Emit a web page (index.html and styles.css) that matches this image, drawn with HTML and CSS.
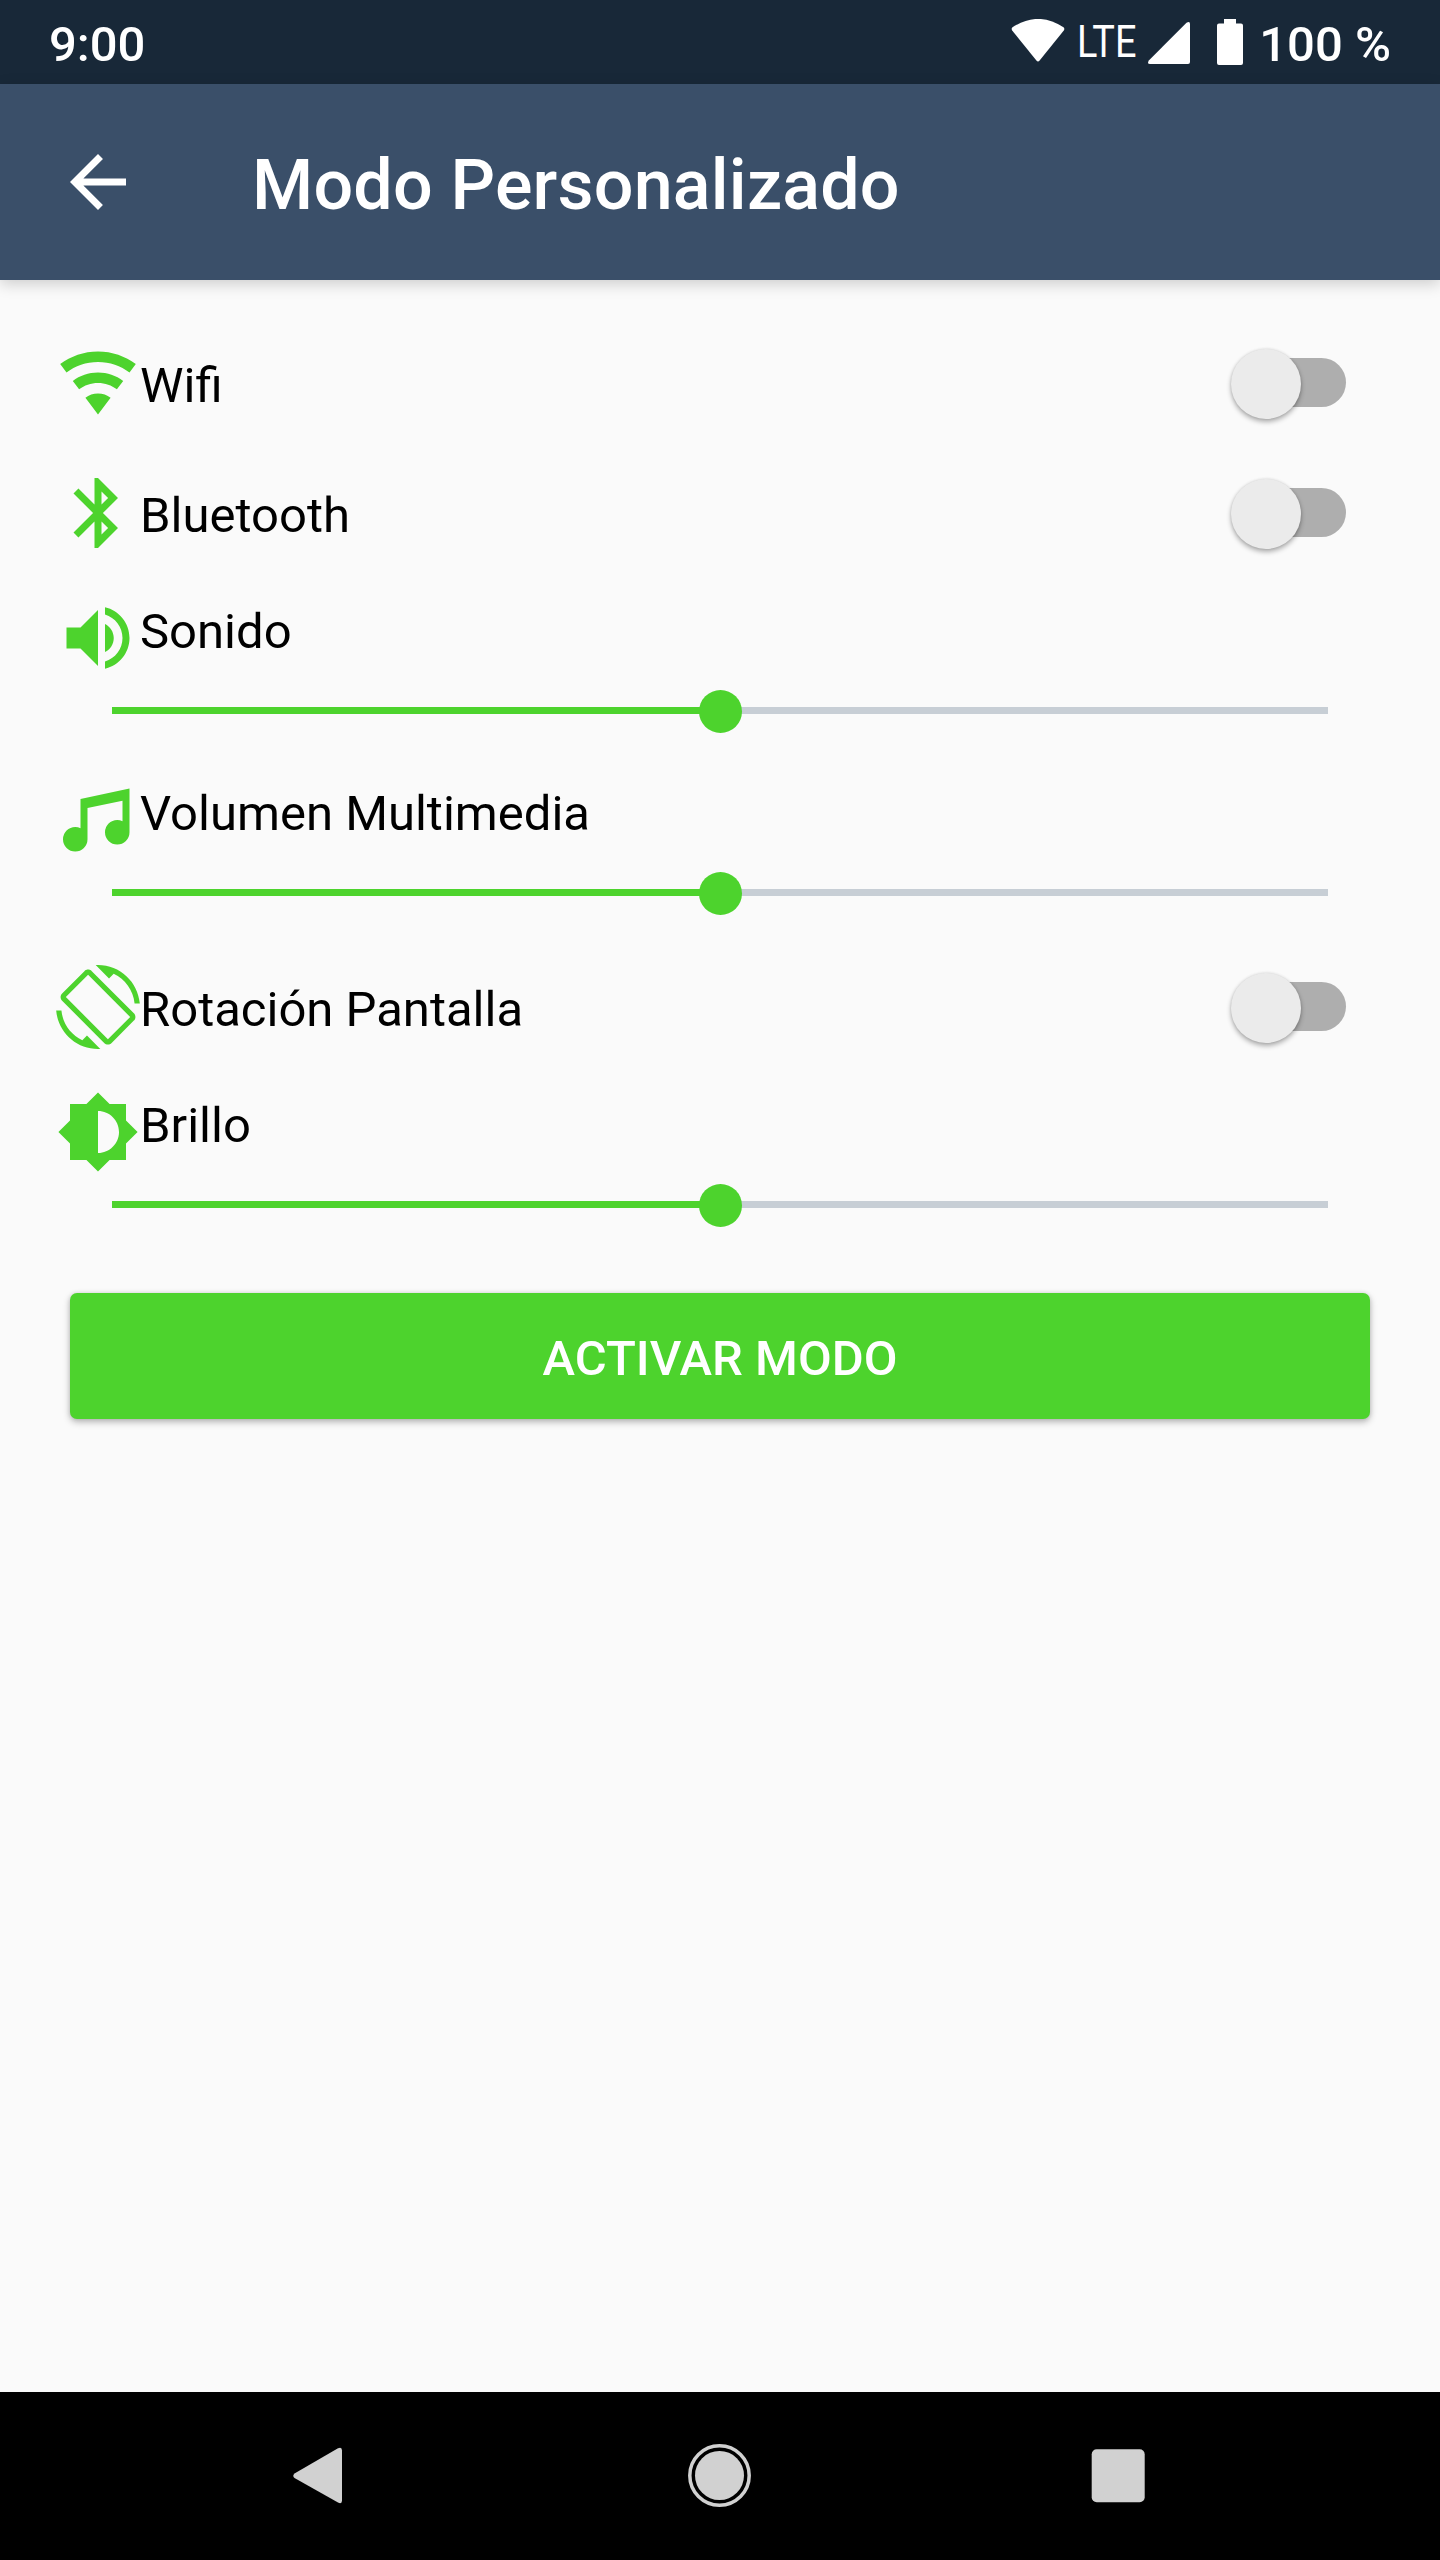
FILE: index.html
```html
<!DOCTYPE html>
<html lang="es">
<head>
  <meta charset="utf-8">
  <title>Modo Personalizado</title>
  <link rel="stylesheet" href="styles.css">
</head>
<body>
  <div class="statusbar">
    <span class="clock">9:00</span>
    <svg class="status-wifi" viewBox="0 0 54 43">
      <path d="M1.500 8.300 Q27 -8.500 52.500 8.300 Q54 9.600 52.800 11.500 L28.600 41.500 Q27 43.400 25.400 41.500 L1.200 11.500 Q0 9.600 1.500 8.300Z"/>
    </svg>
    <span class="status-lte">LTE</span>
    <svg class="status-signal" viewBox="0 0 42 42">
      <path d="M38.500 .8 Q42 -1.200 42 2 V40 Q42 42 40 42 H2 Q-1.200 42 .8 38.500Z"/>
    </svg>
    <svg class="status-battery" viewBox="0 0 26 46">
      <path d="M7 0H19V4.500H24Q26 4.500 26 6.500V44Q26 46 24 46H2Q0 46 0 44V6.500Q0 4.500 2 4.500H7Z"/>
    </svg>
    <span class="percent">100 %</span>
  </div>

  <header class="appbar">
    <svg class="icon" viewBox="0 0 24 24">
      <path d="M20 11H7.830l5.590-5.590L12 4l-8 8 8 8 1.410-1.410L7.830 13H20v-2z"/>
    </svg>
    <h1>Modo Personalizado</h1>
  </header>

  <main>
    <section class="row switch-row">
      <svg class="icon" viewBox="0 0 24 24">
        <path d="M12 21L15.600 16.200C14.600 15.450 13.350 15 12 15C10.650 15 9.400 15.450 8.400 16.200L12 21M12 3C7.950 3 4.210 4.340 1.200 6.600L3 9C5.500 7.120 8.620 6 12 6C15.380 6 18.500 7.120 21 9L22.800 6.600C19.790 4.340 16.050 3 12 3M12 9C9.300 9 6.810 9.890 4.800 11.400L6.600 13.800C8.100 12.670 9.970 12 12 12C14.030 12 15.900 12.670 17.400 13.800L19.200 11.400C17.190 9.890 14.700 9 12 9Z"/>
      </svg>
      <span class="label">Wifi</span>
      <div class="switch"><div class="switch-thumb"></div></div>
    </section>

    <section class="row switch-row">
      <svg class="icon" viewBox="0 0 24 24">
        <path d="M14.880 16.290L13 18.170V14.410M13 5.830L14.880 7.710L13 9.580M17.710 7.710L12 2H11V9.580L6.410 5L5 6.410L10.590 12L5 17.580L6.410 19L11 14.410V22H12L17.710 16.290L13.410 12L17.710 7.710Z"/>
      </svg>
      <span class="label">Bluetooth</span>
      <div class="switch"><div class="switch-thumb"></div></div>
    </section>

    <section class="slider-row">
      <div class="row">
        <svg class="icon" viewBox="0 0 24 24">
          <path d="M3 9v6h4l5 5V4L7 9H3zM16.500 12c0-1.770-1.020-3.290-2.500-4.030v8.050c1.480-.73 2.500-2.250 2.500-4.020zM14 3.230v2.060c2.890.86 5 3.540 5 6.710s-2.110 5.850-5 6.710v2.060c4.010-.91 7-4.490 7-8.770s-2.990-7.860-7-8.770z"/>
        </svg>
        <span class="label">Sonido</span>
      </div>
      <div class="slider">
        <div class="slider-track"><div class="slider-fill"></div></div>
        <div class="slider-thumb"></div>
      </div>
    </section>

    <section class="slider-row">
      <div class="row">
        <svg class="icon" viewBox="0 0 24 24">
          <path d="M21 3V15.500A3.500 3.500 0 0 1 17.500 19A3.500 3.500 0 0 1 14 15.500A3.500 3.500 0 0 1 17.500 12C18.040 12 18.550 12.120 19 12.340V6.470L9 8.600V17.500A3.500 3.500 0 0 1 5.500 21A3.500 3.500 0 0 1 2 17.500A3.500 3.500 0 0 1 5.500 14C6.040 14 6.550 14.120 7 14.340V6L21 3Z"/>
        </svg>
        <span class="label">Volumen Multimedia</span>
      </div>
      <div class="slider">
        <div class="slider-track"><div class="slider-fill"></div></div>
        <div class="slider-thumb"></div>
      </div>
    </section>

    <section class="row switch-row">
      <svg class="icon" viewBox="0 0 24 24">
        <path d="M16.480 2.520c3.270 1.550 5.610 4.720 5.970 8.480h1.500C23.440 4.840 18.290 0 12 0l-.66.03 3.810 3.810 1.330-1.320zM10.230 1.750c-.59-.59-1.540-.59-2.120 0L1.750 8.110c-.59.59-.59 1.540 0 2.120l12.020 12.020c.59.59 1.540.59 2.120 0l6.360-6.360c.59-.59.59-1.540 0-2.120L10.230 1.750zM14.830 21.190L2.810 9.170l6.360-6.360 12.020 12.020-6.360 6.360zM7.520 21.480C4.250 19.940 1.910 16.760 1.550 13H.05C.56 19.160 5.710 24 12 24l.66-.03-3.810-3.810-1.330 1.320z"/>
      </svg>
      <span class="label">Rotación Pantalla</span>
      <div class="switch"><div class="switch-thumb"></div></div>
    </section>

    <section class="slider-row">
      <div class="row">
        <svg class="icon" viewBox="0 0 24 24">
          <path d="M20 15.310L23.310 12 20 8.690V4h-4.690L12 .69 8.690 4H4v4.690L.69 12 4 15.310V20h4.690L12 23.310 15.310 20H20v-4.690zM12 18V6c3.310 0 6 2.690 6 6s-2.690 6-6 6z"/>
        </svg>
        <span class="label">Brillo</span>
      </div>
      <div class="slider">
        <div class="slider-track"><div class="slider-fill"></div></div>
        <div class="slider-thumb"></div>
      </div>
    </section>

    <button class="activate">ACTIVAR MODO</button>
  </main>

  <nav class="navbar">
    <svg viewBox="0 0 84 84">
      <path d="M18.500 39.500L62 14.300Q66 12.500 66 16.500V66.500Q66 70.500 62 68.500L18.500 44Q16 41.800 18.500 39.500Z"/>
    </svg>
    <svg viewBox="0 0 84 84">
      <circle class="ring" cx="43.500" cy="41.500" r="29.700"/>
      <circle cx="43.500" cy="41.500" r="24.500"/>
    </svg>
    <svg viewBox="0 0 84 84">
      <rect x="15.700" y="15.300" width="53" height="53" rx="5"/>
    </svg>
  </nav>
</body>
</html>
```
FILE: styles.css
```css
html, body {
  height: 100%;
  margin: 0;
}
body {
  display: flex;
  flex-direction: column;
  background-color: #fafafa;
  color: #000;
  font-family: Roboto, sans-serif;
  font-size: 49px;
  line-height: 58px;
  overflow: hidden;
}
svg {
  display: block;
  flex: none;
}

/* status bar */
.statusbar {
  display: flex;
  align-items: flex-start;
  box-sizing: border-box;
  height: 84px;
  padding: 16px 49px 0;
  background: #182838;
  color: #fff;
  fill: #fff;
  font-weight: 500;
  white-space: pre;
}
.clock {
  margin-right: auto;
}
.status-wifi {
  width: 54px;
  height: 43px;
  margin-top: 3px;
}
/* narrow lettering, the negative margin takes back the squeezed width */
.status-lte {
  width: 75px;
  margin: -3px -9px 0 12px;
  font-size: 44px;
  font-weight: 400;
  transform: scaleX(0.86);
  transform-origin: left;
}
.status-signal {
  width: 42px;
  height: 42px;
  margin: 6px 0 0 5px;
}
.status-battery {
  width: 26px;
  height: 46px;
  margin: 3px 16px 0 27px;
}

/* app bar */
.appbar {
  display: flex;
  align-items: flex-start;
  box-sizing: border-box;
  height: 196px;
  padding: 56px;
  background: #3a4f69;
  color: #fff;
  fill: #fff;
  box-shadow: 0 4px 14px rgba(0, 0, 0, 0.18);
}
h1 {
  margin: 4px 0 0 112px;
  font-size: 70px;
  font-weight: 500;
  line-height: 82px;
  letter-spacing: 0.2px;
}
.icon {
  width: 84px;
  height: 84px;
}

/* settings */
main {
  display: flex;
  flex-direction: column;
  flex: 1;
  padding-top: 38px;
  fill: #4dd32d;
}
.row {
  display: flex;
  align-items: flex-start;
  padding: 0 94px 0 56px;
}
.switch-row {
  height: 107px;
  padding-top: 23px;
}
.label {
  margin-top: 7px;
}
.switch-row .label {
  margin-top: 16px;
}
.switch {
  position: relative;
  width: 98px;
  height: 49px;
  margin: 17px 0 0 auto;
  border-radius: 25px;
  background: #aeaeae;
}
.switch-thumb {
  position: absolute;
  left: -17px;
  top: -9px;
  width: 70px;
  height: 70px;
  border-radius: 50%;
  background: #ebebeb;
  box-shadow: 0 3px 5px rgba(0, 0, 0, 0.3), 0 0 3px rgba(0, 0, 0, 0.12);
}
.slider-row {
  height: 164px;
  padding-top: 18px;
}
.slider {
  position: relative;
  height: 43px;
  margin: 10px 112px 0;
  padding-top: 17px;
  box-sizing: border-box;
}
.slider-track {
  height: 7px;
  background: #c7ced5;
}
.slider-fill {
  width: 50%;
  height: 7px;
  background: #4dd32d;
}
.slider-thumb {
  position: absolute;
  left: calc(50% - 21px);
  top: 0;
  width: 43px;
  height: 43px;
  border-radius: 50%;
  background: #4dd32d;
}
.activate {
  height: 126px;
  margin: 39px 70px 0;
  padding: 4px 0 0;
  border: none;
  border-radius: 7px;
  background: #4dd32d;
  color: #fff;
  font: 500 49px Roboto, sans-serif;
  box-shadow: 0 3px 7px rgba(0, 0, 0, 0.28), 0 0 4px rgba(0, 0, 0, 0.1);
}

/* system navigation */
.navbar {
  display: flex;
  justify-content: space-between;
  box-sizing: border-box;
  height: 168px;
  padding: 42px 280px 0 276px;
  background: #000;
  fill: #d1d1d1;
}
.navbar svg {
  width: 84px;
  height: 84px;
}
.ring {
  fill: none;
  stroke: #d1d1d1;
  stroke-width: 3.5px;
}
```
